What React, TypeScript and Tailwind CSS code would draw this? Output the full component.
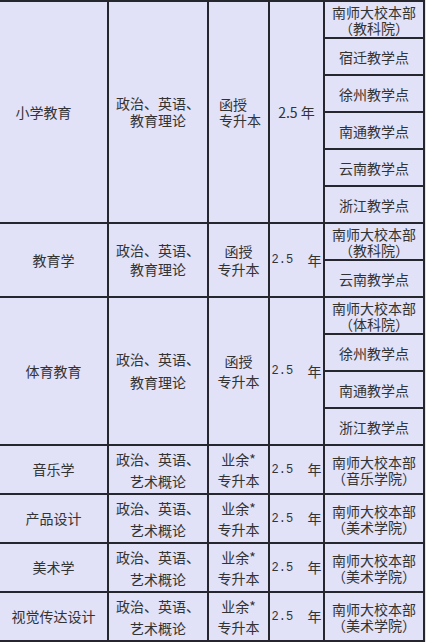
import React from "react";

const font = { fontFamily: '"Noto Sans CJK SC", "Noto Sans", sans-serif' };

function Cell({ className = "", children }: { className?: string; children?: React.ReactNode }) {
  return (
    <div className={`bg-[#e1e1f7] flex flex-col items-center justify-center text-center text-[14px] text-[#333] ${className}`}>
      {children}
    </div>
  );
}

function Years({ mono = true }: { mono?: boolean }) {
  if (!mono) {
    return (
      <span className="whitespace-pre">
        2.5 年
      </span>
    );
  }
  return (
    <span className="whitespace-pre flex items-center">
      <span className="text-[12px]" style={{ fontFamily: '"Liberation Mono", monospace' }}>
        {"2.5  "}
      </span>
      <span>年</span>
    </span>
  );
}

function Campus({ a, b }: { a: string; b?: string }) {
  return (
    <Cell className="leading-[16px]">
      <span>{a}</span>
      {b && <span>{b}</span>}
    </Cell>
  );
}

export default function App() {
  const lower = [
    { name: "音乐学", school: "（音乐学院）" },
    { name: "产品设计", school: "（美术学院）" },
    { name: "美术学", school: "（美术学院）" },
    { name: "视觉传达设计", school: "（美术学院）" },
  ];
  return (
    <div className="w-[426px] h-[642px] bg-[#e1e1f7] overflow-hidden" style={font}>
      <div className="grid w-fit bg-[#26262f] gap-[2px] pt-[2px] pr-[2px] pb-[2px] grid-cols-[107px_98px_59px_53px_98px] grid-rows-[repeat(12,35px)_repeat(4,47px)]">
        {/* 小学教育 */}
        <Cell className="row-span-6 pr-[20px]">小学教育</Cell>
        <Cell className="row-span-6 leading-[17px]">
          <span>政治、英语、</span>
          <span>教育理论</span>
        </Cell>
        <Cell className="row-span-6 leading-[16px] !items-start pl-[10px] !text-left">
          <span>函授</span>
          <span>专升本</span>
        </Cell>
        <Cell className="row-span-6">
          <Years mono={false} />
        </Cell>
        <Campus a="南师大校本部" b="（教科院）" />
        <Campus a="宿迁教学点" />
        <Campus a="徐州教学点" />
        <Campus a="南通教学点" />
        <Campus a="云南教学点" />
        <Campus a="浙江教学点" />

        {/* 教育学 */}
        <Cell className="row-span-2">教育学</Cell>
        <Cell className="row-span-2 leading-[19px]">
          <span>政治、英语、</span>
          <span>教育理论</span>
        </Cell>
        <Cell className="row-span-2 leading-[18px]">
          <span>函授</span>
          <span>专升本</span>
        </Cell>
        <Cell className="row-span-2">
          <Years />
        </Cell>
        <Campus a="南师大校本部" b="（教科院）" />
        <Campus a="云南教学点" />

        {/* 体育教育 */}
        <Cell className="row-span-4">体育教育</Cell>
        <Cell className="row-span-4 leading-[23px]">
          <span>政治、英语、</span>
          <span>教育理论</span>
        </Cell>
        <Cell className="row-span-4 leading-[20px]">
          <span>函授</span>
          <span>专升本</span>
        </Cell>
        <Cell className="row-span-4">
          <Years />
        </Cell>
        <Campus a="南师大校本部" b="（体科院）" />
        <Campus a="徐州教学点" />
        <Campus a="南通教学点" />
        <Campus a="浙江教学点" />

        {lower.map((r) => (
          <React.Fragment key={r.name}>
            <Cell>{r.name}</Cell>
            <Cell className="leading-[22px]">
              <span>政治、英语、</span>
              <span>艺术概论</span>
            </Cell>
            <Cell className="leading-[21px]">
              <span>业余*</span>
              <span>专升本</span>
            </Cell>
            <Cell>
              <Years />
            </Cell>
            <Campus a="南师大校本部" b={r.school} />
          </React.Fragment>
        ))}
      </div>
    </div>
  );
}
